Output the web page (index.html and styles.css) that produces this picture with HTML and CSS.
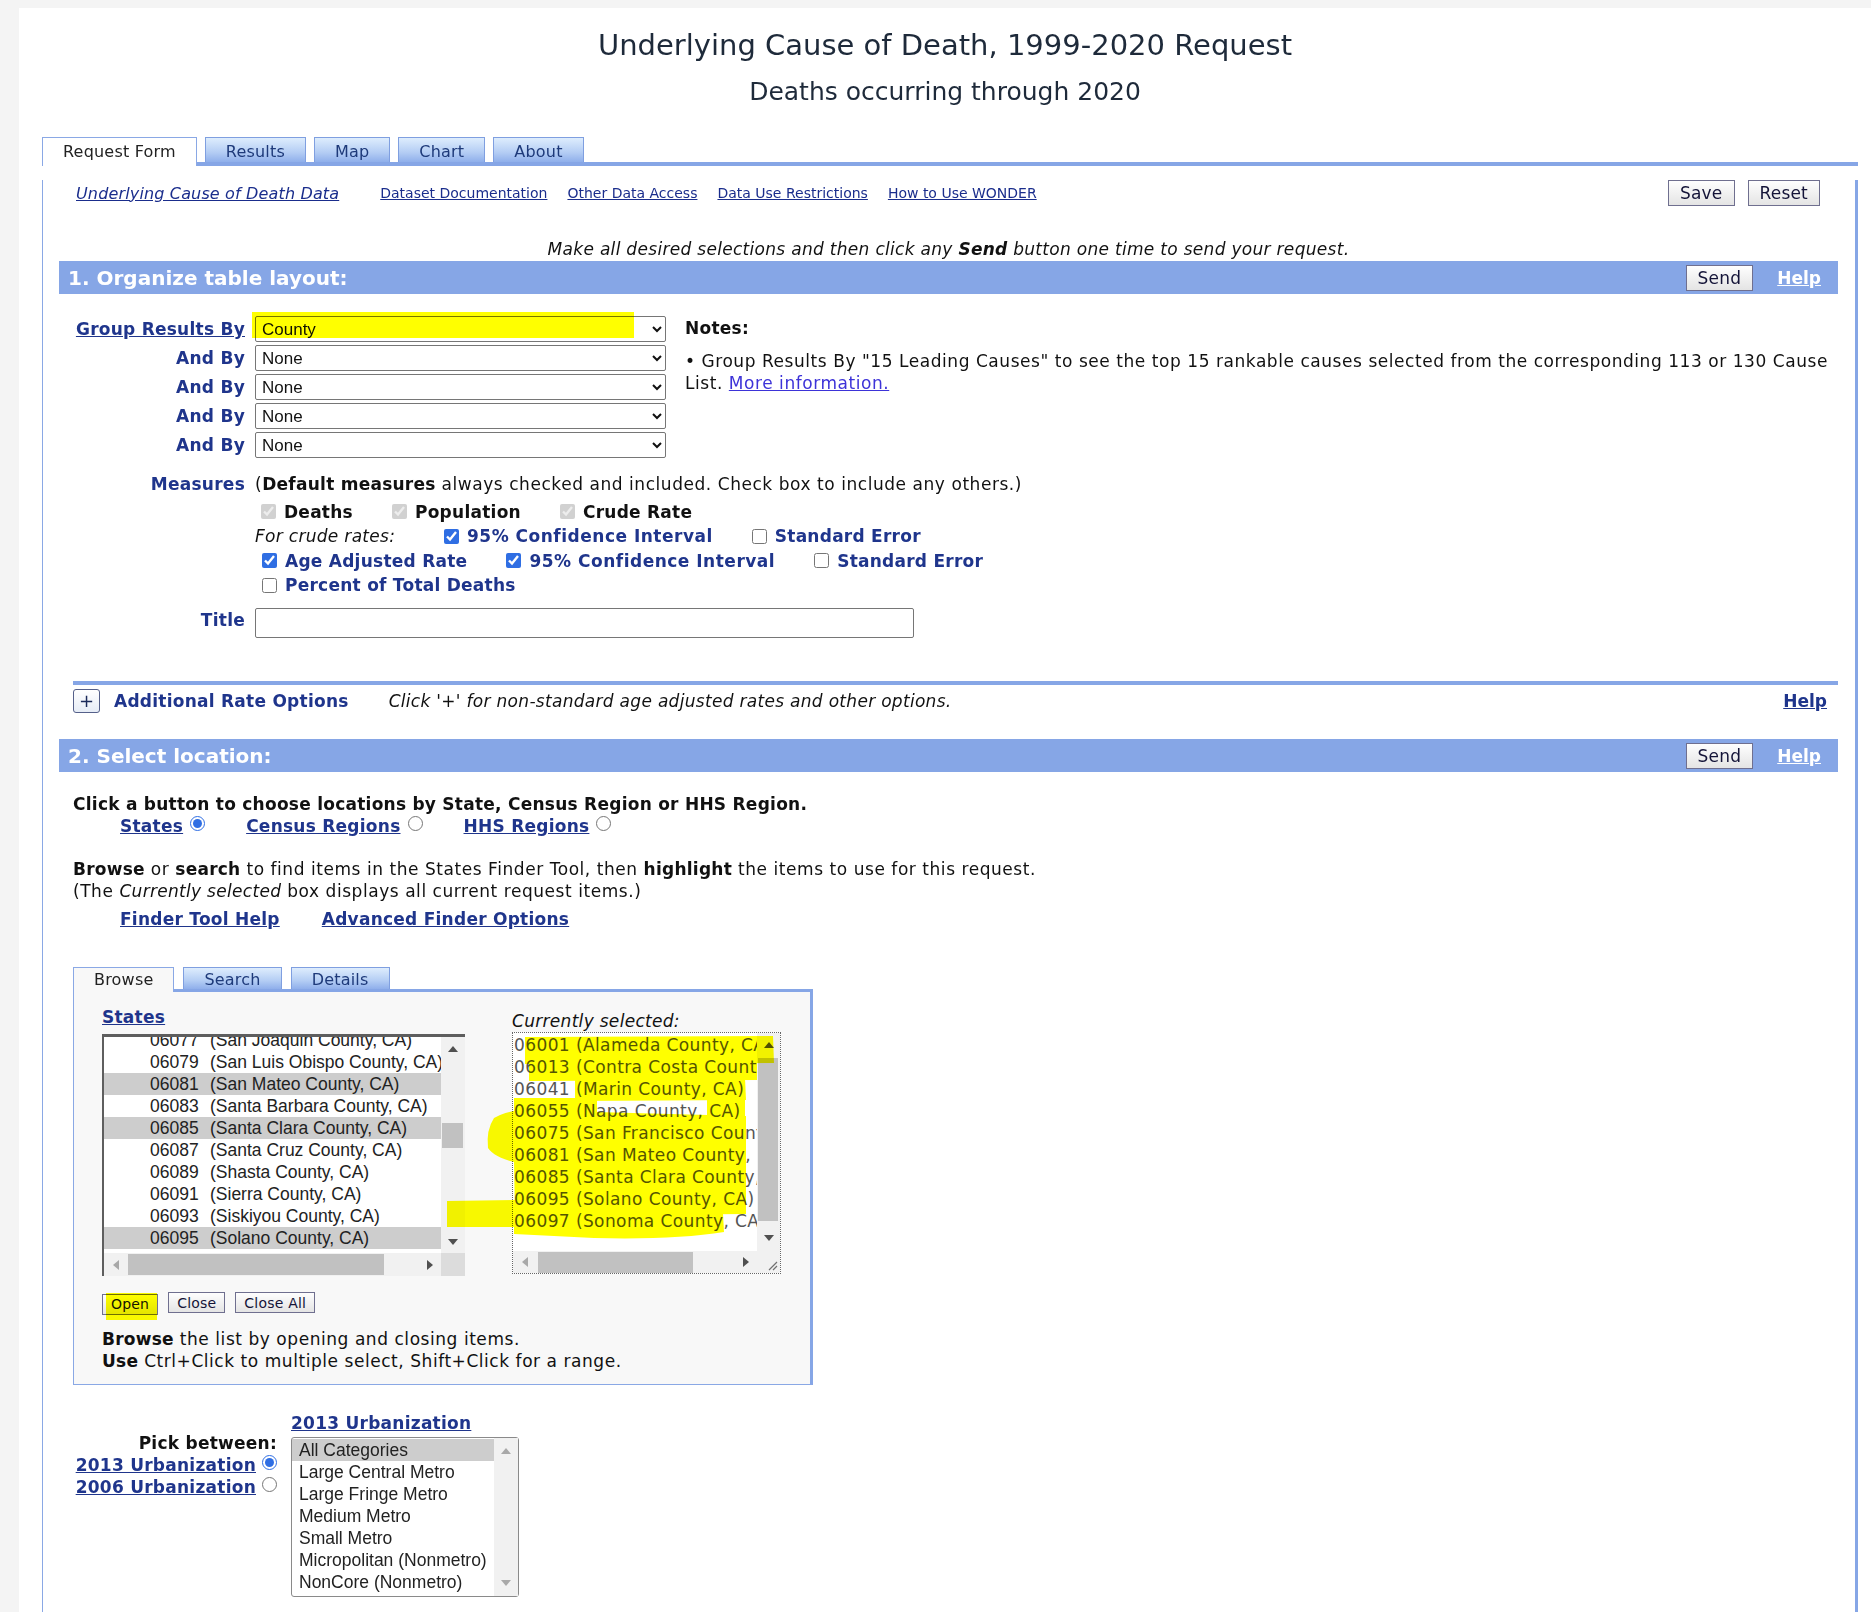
FILE: index.html
```html
<!DOCTYPE html>
<html>
<head>
<meta charset="utf-8">
<title>Underlying Cause of Death, 1999-2020 Request</title>
<link rel="stylesheet" href="styles.css">
</head>
<body>
<div class="page">
  <header class="hdr">
    <h1>Underlying Cause of Death, 1999-2020 Request</h1>
    <h2>Deaths occurring through 2020</h2>
  </header>

  <div class="tabstrip">
    <div class="tab-active">Request Form</div>
    <div class="tabrest">
      <div class="tab">Results</div>
      <div class="tab">Map</div>
      <div class="tab">Chart</div>
      <div class="tab">About</div>
    </div>
  </div>

  <div class="panel">
    <div class="toprow">
      <a class="tl first">Underlying Cause of Death Data</a>
      <a class="tl">Dataset Documentation</a>
      <a class="tl">Other Data Access</a>
      <a class="tl">Data Use Restrictions</a>
      <a class="tl">How to Use WONDER</a>
      <div class="btns"><button class="btn">Save</button><button class="btn">Reset</button></div>
    </div>

    <p class="make">Make all desired selections and then click any <b>Send</b> button one time to send your request.</p>

    <div class="bar">
      <span class="bar-title">1. Organize table layout:</span>
      <span class="bar-act"><button class="btn">Send</button><a class="help">Help</a></span>
    </div>

    <div class="org">
      <div class="lbl"><a class="lnk">Group Results By</a></div>
      <div class="selwrap"><select class="sel"><option>County</option></select><span class="hl-county"></span></div>
      <div class="notes">
        <div class="ntitle">Notes:</div>
        <div class="ntext">&bull; Group Results By "15 Leading Causes" to see the top 15 rankable causes selected from the corresponding 113 or 130 Cause<br>List. <a class="more">More information.</a></div>
      </div>
      <div class="lbl">And By</div>
      <div class="selwrap"><select class="sel"><option>None</option></select></div>
      <div class="lbl">And By</div>
      <div class="selwrap"><select class="sel"><option>None</option></select></div>
      <div class="lbl">And By</div>
      <div class="selwrap"><select class="sel"><option>None</option></select></div>
      <div class="lbl">And By</div>
      <div class="selwrap"><select class="sel"><option>None</option></select></div>
    </div>

    <div class="form2">
      <div class="lbl2">Measures</div>
      <div class="mcontent">
        <div class="mline">(<b>Default measures</b> always checked and included. Check box to include any others.)</div>
        <div class="ckrow r1">
          <label class="ck"><input type="checkbox" checked disabled><b class="blk">Deaths</b></label>
          <label class="ck"><input type="checkbox" checked disabled><b class="blk">Population</b></label>
          <label class="ck"><input type="checkbox" checked disabled><b class="blk">Crude Rate</b></label>
        </div>
        <div class="ckrow r2">
          <span class="crude">For crude rates:</span>
          <label class="ck"><input type="checkbox" checked><b class="wide">95% Confidence Interval</b></label>
          <label class="ck"><input type="checkbox"><b>Standard Error</b></label>
        </div>
        <div class="ckrow r3">
          <label class="ck"><input type="checkbox" checked><b>Age Adjusted Rate</b></label>
          <label class="ck"><input type="checkbox" checked><b class="wide">95% Confidence Interval</b></label>
          <label class="ck"><input type="checkbox"><b>Standard Error</b></label>
        </div>
        <div class="ckrow r3">
          <label class="ck"><input type="checkbox"><b>Percent of Total Deaths</b></label>
        </div>
      </div>
      <div class="lbl2 tlbl">Title</div>
      <div><input class="titlein" type="text"></div>
    </div>

    <div class="aro">
      <span class="plus">+</span>
      <b class="aro-title">Additional Rate Options</b>
      <i class="aro-note">Click '+' for non-standard age adjusted rates and other options.</i>
      <a class="lnk aro-help">Help</a>
    </div>

    <div class="bar bar2">
      <span class="bar-title">2. Select location:</span>
      <span class="bar-act"><button class="btn">Send</button><a class="help">Help</a></span>
    </div>

    <div class="loc">
      <p class="p1"><b>Click a button to choose locations by State, Census Region or HHS Region.</b></p>
      <div class="radios">
        <a class="lnk">States</a><input class="rd" type="radio" name="loc" checked>
        <a class="lnk">Census Regions</a><input class="rd" type="radio" name="loc">
        <a class="lnk">HHS Regions</a><input class="rd" type="radio" name="loc">
      </div>
      <p class="p2"><b>Browse</b> or <b>search</b> to find items in the States Finder Tool, then <b>highlight</b> the items to use for this request.<br>(The <i>Currently selected</i> box displays all current request items.)</p>
      <div class="flinks"><a class="lnk">Finder Tool Help</a><a class="lnk">Advanced Finder Options</a></div>

      <div class="finder">
        <div class="ftabs">
          <div class="ftab-active">Browse</div>
          <div class="ftabrest">
            <div class="ftab">Search</div>
            <div class="ftab">Details</div>
          </div>
        </div>
        <div class="fbody">
          <div class="fcols">
            <div class="fleft">
              <div class="fhead"><a class="lnk">States</a></div>
              <div class="lb">
                <div class="lb-main">
                  <div class="lb-rows">
                    <div class="lb-list">
                      <div class="row"><span class="code">06077</span>(San Joaquin County, CA)</div>
                      <div class="row"><span class="code">06079</span>(San Luis Obispo County, CA)</div>
                      <div class="row sel-row"><span class="code">06081</span>(San Mateo County, CA)</div>
                      <div class="row"><span class="code">06083</span>(Santa Barbara County, CA)</div>
                      <div class="row sel-row"><span class="code">06085</span>(Santa Clara County, CA)</div>
                      <div class="row"><span class="code">06087</span>(Santa Cruz County, CA)</div>
                      <div class="row"><span class="code">06089</span>(Shasta County, CA)</div>
                      <div class="row"><span class="code">06091</span>(Sierra County, CA)</div>
                      <div class="row"><span class="code">06093</span>(Siskiyou County, CA)</div>
                      <div class="row sel-row"><span class="code">06095</span>(Solano County, CA)</div>
                      <div class="row"><span class="code">06097</span>(Sonoma County, CA)</div>
                    </div>
                  </div>
                  <div class="vs">
                    <div class="sbb"><i class="tri-up"></i></div>
                    <div class="vtrack"><div class="vthumb st-vthumb"></div></div>
                    <div class="sbb"><i class="tri-down"></i></div>
                  </div>
                </div>
                <div class="hs">
                  <div class="sbb-h"><i class="tri-left dis"></i></div>
                  <div class="htrack"><div class="hthumb st-hthumb"></div></div>
                  <div class="sbb-h"><i class="tri-right"></i></div>
                  <div class="corner"></div>
                </div>
              </div>
            </div>
            <div class="fright">
              <div class="cshead"><i>Currently selected:</i></div>
              <div class="ta">
                <div class="lb-main ta-main">
                  <div class="ta-rows">
                    <div class="trow">06001 (Alameda County, CA)</div>
                    <div class="trow">06013 (Contra Costa County, CA)</div>
                    <div class="trow">06041 (Marin County, CA)</div>
                    <div class="trow">06055 (Napa County, CA)</div>
                    <div class="trow">06075 (San Francisco County, CA)</div>
                    <div class="trow">06081 (San Mateo County, CA)</div>
                    <div class="trow">06085 (Santa Clara County, CA)</div>
                    <div class="trow">06095 (Solano County, CA)</div>
                    <div class="trow">06097 (Sonoma County, CA)</div>
                  </div>
                  <div class="vs ta-vs">
                    <div class="sbb"><i class="tri-up"></i></div>
                    <div class="vtrack"><div class="vthumb ta-vthumb"></div></div>
                    <div class="sbb sbb-low"><i class="tri-down"></i></div>
                  </div>
                </div>
                <div class="hs ta-hs">
                  <div class="sbb-h"><i class="tri-left dis"></i></div>
                  <div class="htrack"><div class="hthumb ta-hthumb"></div></div>
                  <div class="sbb-h"><i class="tri-right"></i></div>
                  <div class="corner grip"><svg width="23" height="22" viewBox="0 0 23 22"><path d="M12 19 L20 11 M16 19 L20 15" stroke="#707070" stroke-width="1.2" fill="none"/></svg></div>
                </div>
              </div>
            </div>
          </div>
          <div class="fbtns">
            <span class="bwrap"><button class="sbtn">Open</button><span class="hl-open"></span></span>
            <button class="sbtn">Close</button>
            <button class="sbtn">Close All</button>
          </div>
          <p class="fhelp"><b>Browse</b> the list by opening and closing items.<br><b>Use</b> Ctrl+Click to multiple select, Shift+Click for a range.</p>
          <svg class="scribble" width="736" height="260" viewBox="0 0 736 260">
            <g fill="#ffff00">
              <path d="M451 45 L699 44 L700 71 L451 72 Z"/>
              <path d="M455 71 L683 70 L683 88 L455 89 Z"/>
              <path d="M501 86 L671 86 L672 108 L501 109 Z"/>
              <path d="M440 106 L523 106 L523 130 L440 130 Z"/>
              <path d="M633 104 L671 104 L671 130 L633 130 Z"/>
              <path d="M420 126 Q430 120 446 118 L672 124 L672 222 L441 224 L440 170 Q420 165 414 156 Q412 138 420 126 Z"/>
              <path d="M373 209 L441 208 L441 235 L373 235 Z"/>
              <path d="M440 222 L649 222 L650 240 Q600 248 520 246 L440 242 Z"/>
            </g>
          </svg>
        </div>
      </div>

      <div class="urb">
        <div class="urb-left">
          <div class="pick"><b>Pick between:</b></div>
          <div class="urow"><a class="lnk">2013 Urbanization</a><input class="rd" type="radio" name="urb" checked></div>
          <div class="urow"><a class="lnk">2006 Urbanization</a><input class="rd" type="radio" name="urb"></div>
        </div>
        <div class="urb-right">
          <div class="urb-head"><a class="lnk">2013 Urbanization</a></div>
          <div class="ulb">
            <div class="ulb-rows">
              <div class="urow2 sel-row">All Categories</div>
              <div class="urow2">Large Central Metro</div>
              <div class="urow2">Large Fringe Metro</div>
              <div class="urow2">Medium Metro</div>
              <div class="urow2">Small Metro</div>
              <div class="urow2">Micropolitan (Nonmetro)</div>
              <div class="urow2">NonCore (Nonmetro)</div>
            </div>
            <div class="vs ulb-vs">
              <div class="sbb"><i class="tri-up dis"></i></div>
              <div class="vtrack"></div>
              <div class="sbb"><i class="tri-down dis"></i></div>
            </div>
          </div>
        </div>
      </div>
    </div>
  </div>
</div>
</body>
</html>
```

FILE: styles.css
```css
html, body { margin: 0; padding: 0; }
body {
  background: #f4f4f4;
  font-family: "DejaVu Sans", Verdana, sans-serif;
  font-size: 17px;
  letter-spacing: 0.55px;
  color: #111;
}
b, .lnk, .lbl, .lbl2, .ntitle { font-weight: bold; letter-spacing: 0.25px; }
i, .crude, .make { letter-spacing: 0.3px; }
a { cursor: pointer; }
p { margin: 0; }

.page {
  margin: 8px 0 0 19px;
  background: #fff;
  min-height: 1604px;
  overflow: hidden;
}

/* header */
.hdr {
  box-sizing: border-box;
  height: 129px;
  padding-top: 20px;
  text-align: center;
  letter-spacing: 0;
}
.hdr h1 {
  margin: 0;
  font-size: 29px;
  font-weight: normal;
  line-height: 34px;
  color: #1e2a3a;
}
.hdr h2 {
  margin: 15px 0 0;
  font-size: 25px;
  font-weight: normal;
  line-height: 30px;
  color: #1e2a3a;
}

/* main tabs */
.tabstrip {
  display: flex;
  align-items: flex-end;
  margin: 0 13px 0 23px;
  height: 29px;
  font-size: 16px;
  letter-spacing: 0.2px;
}
.tab-active {
  box-sizing: border-box;
  height: 29px;
  border: 1px solid #8aa8e5;
  border-bottom: 0;
  padding: 0 20px;
  line-height: 28px;
  background: #fff;
  color: #222;
}
.tabrest {
  flex: 1;
  box-sizing: border-box;
  height: 29px;
  display: flex;
  align-items: flex-end;
  gap: 8px;
  padding-left: 8px;
  border-bottom: 4px solid #86a6e6;
}
.tab {
  box-sizing: border-box;
  height: 25px;
  border: 1px solid #7f9fe0;
  border-bottom: 0;
  padding: 0 20px;
  line-height: 27px;
  background: linear-gradient(#deedfd, #b4cdf4 60%, #8fafeb);
  color: #1e3a7a;
}

/* panel */
.panel {
  margin: 0 13px 0 23px;
  border-left: 1px solid #8aa8e5;
  border-right: 3px solid #86a6e6;
  padding: 0 17px 60px 16px;
}

.toprow {
  display: flex;
  align-items: center;
  height: 26px;
  margin-top: 14px;
  padding: 0 18px 0 17px;
  font-size: 14px;
  letter-spacing: 0;
}
.tl {
  color: #1a2d8c;
  text-decoration: underline;
  margin-right: 20px;
}
.tl.first {
  font-style: italic;
  font-size: 16px;
  letter-spacing: 0.15px;
  margin-right: 41px;
}
.btns {
  margin-left: auto;
  display: flex;
  gap: 13px;
}
.btn {
  box-sizing: border-box;
  font-family: "DejaVu Sans", Verdana, sans-serif;
  font-size: 17px;
  letter-spacing: 0.2px;
  height: 26px;
  padding: 0 11px;
  border: 1px solid #6f6f8f;
  border-radius: 0;
  background: linear-gradient(#fefefe, #e4e4e4);
  color: #141438;
}

.make {
  margin: 33px 0 2px;
  line-height: 20px;
  text-align: center;
  font-style: italic;
}

.bar {
  box-sizing: border-box;
  height: 33px;
  background: #86a6e6;
  display: flex;
  align-items: center;
  justify-content: space-between;
  padding: 0 17px 0 9px;
}
.bar-title {
  color: #fff;
  font-weight: bold;
  font-size: 20px;
  letter-spacing: 0;
}
.bar-act {
  display: flex;
  align-items: center;
}
.help {
  margin-left: 24px;
  color: #fff;
  font-weight: bold;
  font-size: 17px;
  letter-spacing: 0;
  text-decoration: underline;
}

.lnk {
  color: #1f358c;
  text-decoration: underline;
}

/* organize grid */
.org {
  display: grid;
  grid-template-columns: 186px 411px 1fr;
  column-gap: 10px;
  row-gap: 3px;
  margin-top: 22px;
}
.lbl {
  display: flex;
  align-items: center;
  justify-content: flex-end;
  color: #1f358c;
  height: 26px;
}
.selwrap {
  position: relative;
  height: 26px;
}
.sel {
  box-sizing: border-box;
  width: 411px;
  height: 26px;
  font-family: "Liberation Sans", Arial, sans-serif;
  font-size: 17px;
  letter-spacing: 0;
  color: #111;
  border: 1px solid #767676;
  border-radius: 2px;
  background: #fff;
  padding: 0 2px;
}
.hl-county {
  position: absolute;
  left: -3px;
  top: -4px;
  width: 382px;
  height: 26px;
  background: #ffff00;
  mix-blend-mode: multiply;
  pointer-events: none;
}
.notes {
  grid-column: 3;
  grid-row: 1 / span 5;
  padding-left: 9px;
  line-height: 22px;
}
.ntitle {
  padding-top: 1px;
}
.ntext {
  margin-top: 11px;
  white-space: nowrap;
}
.more {
  color: #3d33d8;
  text-decoration: underline;
}

/* measures */
.form2 {
  display: grid;
  grid-template-columns: 186px 1fr;
  column-gap: 10px;
  margin-top: 14px;
}
.lbl2 {
  text-align: right;
  color: #1f358c;
  line-height: 24px;
}
.mline {
  line-height: 24px;
  margin-bottom: 3.5px;
}
.ckrow {
  display: flex;
  align-items: center;
  height: 24.5px;
}
.ckrow.r1 { padding-left: 6px; }
.ckrow.r3 { padding-left: 7px; }
.ck {
  display: flex;
  align-items: center;
  margin-right: 39px;
  color: #1f358c;
}
.ck input {
  width: 15px;
  height: 15px;
  margin: 0 8px 0 0;
  accent-color: #2f6ee3;
}
.ck .wide { letter-spacing: 0.5px; }
.blk { color: #111; }
.crude {
  font-style: italic;
  width: 189px;
}
.tlbl { margin-top: 10px; }
.titlein {
  box-sizing: border-box;
  width: 659px;
  height: 30px;
  margin-top: 10.5px;
  border: 1px solid #767676;
  border-radius: 2px;
}

/* additional rate options */
.aro {
  margin: 43px 0 0 14px;
  border-top: 4px solid #86a6e6;
  padding-top: 4px;
  display: flex;
  align-items: center;
  height: 24px;
}
.plus {
  box-sizing: border-box;
  width: 27px;
  height: 24px;
  border: 1px solid #55608a;
  border-radius: 3px;
  background: linear-gradient(#ffffff, #e6ecf6);
  color: #1a2a5a;
  font-size: 18px;
  letter-spacing: 0;
  line-height: 21px;
  text-align: center;
  margin-right: 14px;
}
.aro-title {
  color: #1f358c;
}
.aro-note {
  margin-left: 40px;
}
.aro-help {
  margin-left: auto;
  margin-right: 11px;
  letter-spacing: 0;
}
.bar2 { margin-top: 26px; }

/* select location */
.loc {
  padding-left: 14px;
  line-height: 22px;
}
.p1 { margin-top: 21px; }
.radios {
  display: flex;
  align-items: center;
  padding-left: 47px;
  height: 22px;
}
.rd {
  width: 15px;
  height: 15px;
  margin: 0 41px 5px 7px;
  accent-color: #2f6ee3;
}
.p2 { margin-top: 21px; }
.flinks {
  margin-top: 6px;
  padding-left: 47px;
  display: flex;
  gap: 42px;
}

/* finder */
.finder {
  width: 740px;
  margin-top: 37px;
}
.ftabs {
  display: flex;
  align-items: flex-end;
  height: 25px;
  font-size: 16px;
  letter-spacing: 0.2px;
}
.ftab-active {
  box-sizing: border-box;
  height: 25px;
  border: 1px solid #8aa8e5;
  border-bottom: 0;
  background: #f8f8f8;
  padding: 0 20px;
  line-height: 24px;
  color: #222;
}
.ftabrest {
  flex: 1;
  box-sizing: border-box;
  height: 25px;
  display: flex;
  align-items: flex-end;
  gap: 9px;
  padding-left: 9px;
  border-bottom: 3px solid #86a6e6;
}
.ftab {
  box-sizing: border-box;
  height: 22px;
  border: 1px solid #7f9fe0;
  border-bottom: 0;
  padding: 0 20px;
  line-height: 23px;
  background: linear-gradient(#deedfd, #b4cdf4 60%, #8fafeb);
  color: #1e3a7a;
}
.fbody {
  position: relative;
  background: #f8f8f8;
  border-left: 1px solid #8aa8e5;
  border-right: 3px solid #86a6e6;
  border-bottom: 1px solid #8aa8e5;
  padding: 14px 0 12px 28px;
}
.fcols {
  display: flex;
  gap: 47px;
}
.fhead { height: 22px; }

/* states list box */
.lb {
  box-sizing: border-box;
  width: 363px;
  height: 242px;
  margin-top: 6px;
  border-top: 3px solid #5e5e5e;
  border-left: 2px solid #5e5e5e;
  background: #fff;
  display: flex;
  flex-direction: column;
}
.lb-main {
  flex: 1;
  display: flex;
  min-height: 0;
}
.lb-rows {
  flex: 1;
  overflow: hidden;
  font-family: "Liberation Sans", Arial, sans-serif;
  font-size: 17.5px;
  letter-spacing: 0;
  color: #222;
}
.lb-list { margin-top: -8px; }
.row {
  height: 22px;
  line-height: 22px;
  padding-left: 46px;
  white-space: nowrap;
}
.code {
  display: inline-block;
  width: 60px;
}
.sel-row { background: #cdcdcd; }

.vs {
  width: 24px;
  background: #f1f1f1;
  display: flex;
  flex-direction: column;
}
.sbb {
  height: 23px;
  flex: none;
  display: flex;
  align-items: center;
  justify-content: center;
}
.sbb-low { height: 26px; }
.vtrack { flex: 1; }
.vthumb {
  width: 21px;
  margin-left: 1px;
  background: #c1c1c1;
}
.st-vthumb { margin-top: 63px; height: 25px; }
.ta-vthumb { margin-top: 2px; height: 163px; width: 20px; }

.hs {
  height: 23px;
  flex: none;
  display: flex;
  background: #f1f1f1;
}
.sbb-h {
  width: 23px;
  flex: none;
  display: flex;
  align-items: center;
  justify-content: center;
}
.htrack { flex: 1; display: flex; align-items: center; }
.hthumb {
  height: 21px;
  background: #c1c1c1;
}
.st-hthumb { margin-left: 1px; width: 256px; }
.ta-hthumb { margin-left: 2px; width: 155px; }
.corner {
  width: 24px;
  flex: none;
  background: #dcdcdc;
}

.tri-up, .tri-down, .tri-left, .tri-right {
  display: block;
  width: 0;
  height: 0;
}
.tri-up {
  border-left: 5px solid transparent;
  border-right: 5px solid transparent;
  border-bottom: 6px solid #505050;
}
.tri-down {
  border-left: 5px solid transparent;
  border-right: 5px solid transparent;
  border-top: 6px solid #505050;
}
.tri-left {
  border-top: 5px solid transparent;
  border-bottom: 5px solid transparent;
  border-right: 6px solid #505050;
}
.tri-right {
  border-top: 5px solid transparent;
  border-bottom: 5px solid transparent;
  border-left: 6px solid #505050;
}
.tri-up.dis { border-bottom-color: #a8a8a8; }
.tri-down.dis { border-top-color: #a8a8a8; }
.tri-left.dis { border-right-color: #a8a8a8; }

/* currently selected */
.fright { padding-top: 5px; }
.cshead { height: 21px; line-height: 21px; }
.ta {
  box-sizing: border-box;
  width: 269px;
  height: 242px;
  border: 1px dotted #666;
  background: #fff;
  display: flex;
  flex-direction: column;
}
.ta-rows {
  flex: 1;
  overflow: hidden;
  padding: 1px 0 0 1px;
  font-size: 17px;
  letter-spacing: 0.4px;
  color: #555;
}
.trow {
  height: 22px;
  line-height: 22px;
  white-space: nowrap;
}
.ta-vs { width: 23px; }
.ta-hs { height: 22px; }
.ta-hs .corner { width: 23px; background: #f1f1f1; }
.grip svg { display: block; }

.fbtns {
  display: flex;
  gap: 10px;
  margin-top: 16px;
}
.bwrap { position: relative; display: inline-block; }
.sbtn {
  box-sizing: border-box;
  height: 21px;
  padding: 0 8px;
  font-family: "DejaVu Sans", Verdana, sans-serif;
  font-size: 14px;
  letter-spacing: 0.2px;
  border: 1px solid #6f6f8f;
  border-radius: 0;
  background: linear-gradient(#fefefe, #e4e4e4);
  color: #141438;
}
.hl-open {
  position: absolute;
  left: 4px;
  top: 1px;
  width: 51px;
  height: 27px;
  background: #ffff00;
  mix-blend-mode: multiply;
  pointer-events: none;
}
.fhelp { margin-top: 13px; }
.scribble {
  position: absolute;
  left: 0;
  top: 0;
  mix-blend-mode: multiply;
  pointer-events: none;
}

/* urbanization */
.urb {
  display: flex;
  gap: 14px;
  margin-top: 27px;
}
.urb-left {
  width: 203px;
  margin-left: 1px;
  padding-top: 20px;
  text-align: right;
}
.urow {
  display: flex;
  align-items: center;
  justify-content: flex-end;
  height: 22px;
}
.urow .rd { margin: 0 0 5px 6px; }
.urb-head { height: 22px; }
.ulb {
  box-sizing: border-box;
  width: 228px;
  height: 160px;
  margin-top: 3px;
  border: 1px solid #8a8a8a;
  border-radius: 3px;
  background: #fff;
  display: flex;
}
.ulb-rows {
  flex: 1;
  padding-top: 1px;
  font-family: "Liberation Sans", Arial, sans-serif;
  font-size: 17.5px;
  letter-spacing: 0;
  color: #222;
}
.urow2 {
  height: 22px;
  line-height: 22px;
  padding-left: 7px;
  white-space: nowrap;
}
.ulb-vs .sbb { height: 26px; }
```
